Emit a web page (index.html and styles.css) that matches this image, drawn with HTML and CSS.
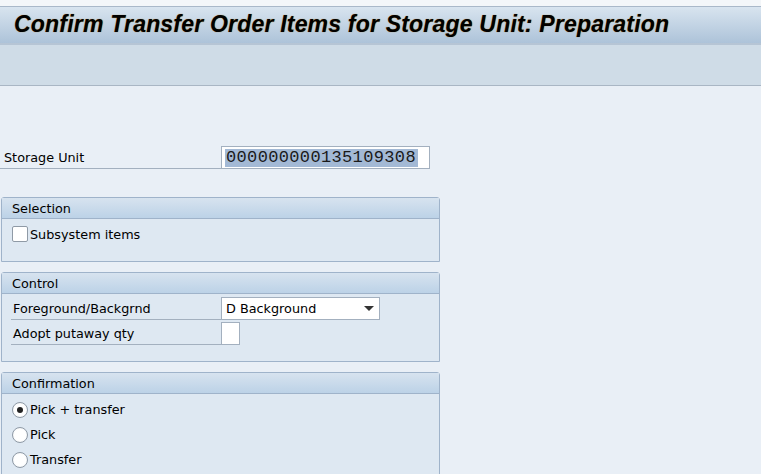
FILE: index.html
```html
<!DOCTYPE html>
<html lang="en">

<head>
    <meta charset="UTF-8">
    <title>Confirm Transfer Order Items for Storage Unit: Preparation</title>
    <link rel="stylesheet" href="styles.css">
</head>

<body>
    <div class="top-strip"></div>
    <div class="titlebar">
        <h1>Confirm Transfer Order Items for Storage Unit: Preparation</h1>
    </div>
    <div class="toolbar"></div>

    <div class="content">
        <div class="field-row main-row">
            <div class="label wide">Storage Unit</div>
            <div class="input su-input"><span class="selected">000000000135109308</span></div>
        </div>

        <div class="group selection">
            <div class="group-header">Selection</div>
            <div class="group-body">
                <div class="check-row">
                    <span class="checkbox"></span>
                    <span>Subsystem items</span>
                </div>
            </div>
        </div>

        <div class="group control">
            <div class="group-header">Control</div>
            <div class="group-body">
                <div class="field-row">
                    <div class="label">Foreground/Backgrnd</div>
                    <div class="input dropdown">
                        <span>D Background</span>
                        <span class="arrow"></span>
                    </div>
                </div>
                <div class="field-row">
                    <div class="label">Adopt putaway qty</div>
                    <div class="input small-box"></div>
                </div>
            </div>
        </div>

        <div class="group confirmation">
            <div class="group-header">Confirmation</div>
            <div class="group-body">
                <div class="radio-row"><span class="radio checked"></span><span>Pick + transfer</span></div>
                <div class="radio-row"><span class="radio"></span><span>Pick</span></div>
                <div class="radio-row"><span class="radio"></span><span>Transfer</span></div>
            </div>
        </div>
    </div>
</body>

</html>
```

FILE: styles.css
```css
body {
    margin: 0;
    padding: 0;
    background-color: #e9eff6;
    font-family: 'DejaVu Sans', Tahoma, sans-serif;
    font-size: 12.8px;
    color: #000;
    overflow: hidden;
}

.top-strip {
    height: 6px;
    background-color: #f3f6f9;
    border-bottom: 1px solid #a9b8c9;
}

.titlebar {
    height: 36px;
    background: linear-gradient(#d8e4ef, #adc3d9);
    border-bottom: 2px solid #b6c5d5;
    display: flex;
    align-items: center;
}

.titlebar h1 {
    margin: -1px 0 0 14px;
    font-family: 'Liberation Sans', Arial, sans-serif;
    font-size: 23px;
    font-weight: bold;
    font-style: italic;
    color: #000;
    text-shadow: 0 0 1px #b07a20;
    letter-spacing: 0.2px;
}

.toolbar {
    height: 40px;
    background-color: #cfdce7;
    border-bottom: 1px solid #a9b6c4;
}

.content {
    padding-top: 60px;
}

.field-row {
    display: flex;
    align-items: stretch;
    height: 23px;
}

.main-row {
    margin-bottom: 28px;
}

.label {
    width: 208px;
    margin-left: 9px;
    padding-left: 2px;
    border-bottom: 1px solid #a3b0bf;
    display: flex;
    align-items: center;
}

.label.wide {
    width: 217px;
    margin-left: 0;
    padding-left: 4px;
}

.input {
    background-color: #fff;
    border: 1px solid #a3b0bf;
    box-sizing: border-box;
    display: flex;
    align-items: center;
}

.su-input {
    width: 209px;
    padding-left: 3px;
}

.selected {
    background-color: #a3b9d5;
    font-family: 'Liberation Mono', 'Courier New', monospace;
    font-size: 17px;
    letter-spacing: 0.35px;
    color: #1a1a1a;
    padding: 0 2px 0 1px;
    line-height: 18px;
}

.group {
    margin-left: 1px;
    width: 439px;
    border: 1px solid #9fb3ca;
    border-radius: 3px 3px 0 0;
    background-color: #dee8f2;
    box-sizing: border-box;
    margin-bottom: 10px;
}

.group-header {
    height: 20px;
    padding-left: 10px;
    background: linear-gradient(#d7e3ef, #bcd2e7);
    border-bottom: 1px solid #9fb3ca;
    display: flex;
    align-items: center;
}

.selection .group-body {
    height: 42px;
    padding: 7px 0 0 10px;
    box-sizing: border-box;
}

.control .group-body {
    height: 67px;
    padding-top: 3px;
    box-sizing: border-box;
}

.control .field-row + .field-row {
    margin-top: 2px;
}

.dropdown {
    width: 159px;
    padding: 0 5px 0 4px;
    justify-content: space-between;
}

.arrow {
    width: 0;
    height: 0;
    border-left: 5px solid transparent;
    border-right: 5px solid transparent;
    border-top: 5px solid #333;
}

.small-box {
    width: 19px;
}

.check-row,
.radio-row {
    display: flex;
    align-items: center;
}

.checkbox {
    width: 16px;
    height: 16px;
    box-sizing: border-box;
    background-color: #fff;
    border: 1px solid #8f9aa6;
    border-radius: 2px;
    margin-right: 2px;
}

.confirmation .group-body {
    padding: 3px 0 10px 10px;
}

.radio-row {
    height: 25px;
}

.radio {
    width: 16px;
    height: 16px;
    box-sizing: border-box;
    border-radius: 50%;
    background: radial-gradient(#fff 55%, #e4e8ec);
    border: 1px solid #8f9aa6;
    margin-right: 2px;
    display: flex;
    align-items: center;
    justify-content: center;
}

.radio.checked::after {
    content: "";
    width: 6px;
    height: 6px;
    border-radius: 50%;
    background-color: #222;
}
```
